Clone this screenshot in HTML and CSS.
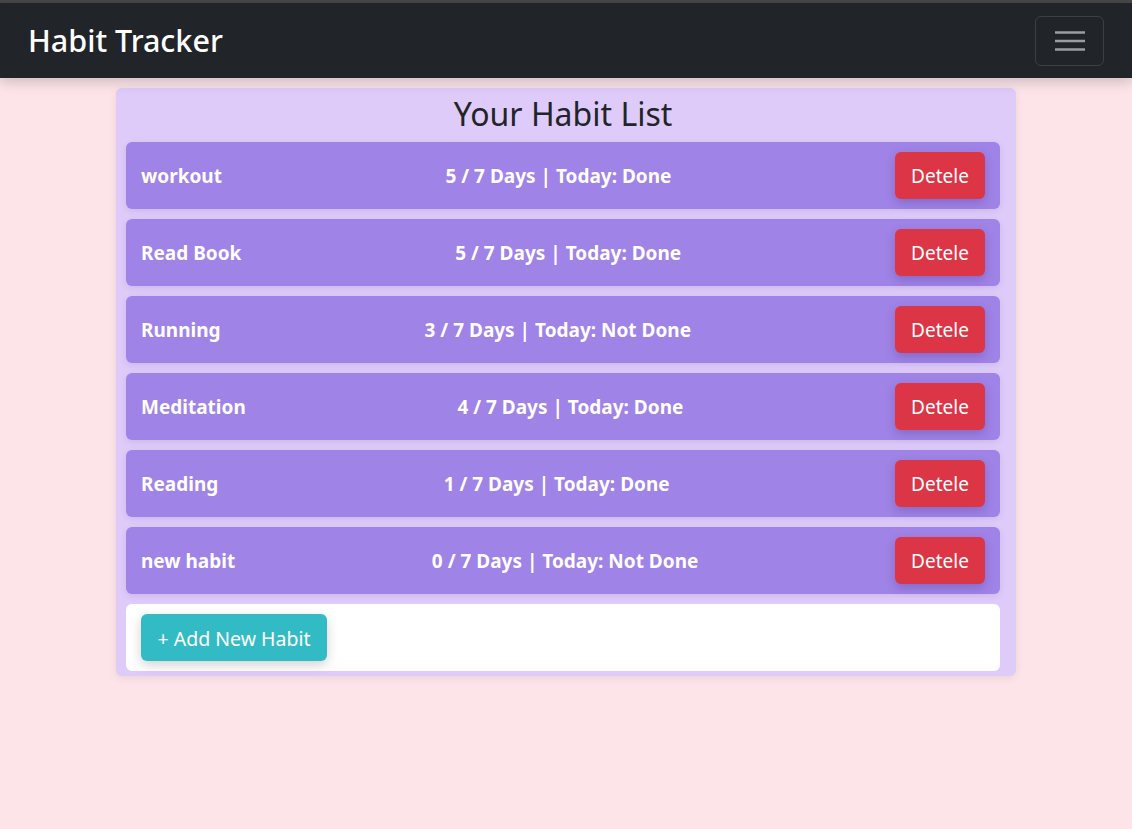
FILE: index.html
```html
<!DOCTYPE html>
<html lang="en">
<head>
<meta charset="utf-8">
<title>Habit Tracker</title>
<link rel="stylesheet" href="styles.css">
</head>
<body>
<div class="topstrip"></div>
<nav class="navbar">
  <span class="brand">Habit Tracker</span>
  <button class="toggler" aria-label="menu">
    <svg width="30" height="24" viewBox="0 0 30 24"><path d="M0 3.5h30M0 12h30M0 20.5h30" stroke="#9b9d9f" stroke-width="2.6" fill="none"/></svg>
  </button>
</nav>
<main class="wrap">
  <section class="card">
    <h2 class="title">Your Habit List</h2>
    <div class="row"><span class="name">workout</span><span class="stat">5 / 7 Days | Today: Done</span><button class="del">Detele</button></div>
    <div class="row"><span class="name">Read Book</span><span class="stat">5 / 7 Days | Today: Done</span><button class="del">Detele</button></div>
    <div class="row"><span class="name">Running</span><span class="stat">3 / 7 Days | Today: Not Done</span><button class="del">Detele</button></div>
    <div class="row"><span class="name">Meditation</span><span class="stat">4 / 7 Days | Today: Done</span><button class="del">Detele</button></div>
    <div class="row"><span class="name">Reading</span><span class="stat">1 / 7 Days | Today: Done</span><button class="del">Detele</button></div>
    <div class="row"><span class="name">new habit</span><span class="stat">0 / 7 Days | Today: Not Done</span><button class="del">Detele</button></div>
    <div class="addbox"><button class="add">+ Add New Habit</button></div>
  </section>
</main>
</body>
</html>
```
FILE: styles.css
```css
* { box-sizing: border-box; }
html, body { margin: 0; padding: 0; }
body {
  background: #fce4e9;
  font-family: "Noto Sans", "Open Sans", sans-serif;
  color: #212529;
  min-height: 829px;
}
.topstrip { height: 3px; background: #474747; }
.navbar {
  height: 75px;
  background: #212529;
  display: flex;
  align-items: center;
  justify-content: space-between;
  padding: 0 28px;
  box-shadow: 0 4px 12px rgba(0,0,0,0.18);
  position: relative;
}
.brand { color: #fff; font-size: 30.5px; line-height: 1; font-weight: 500; }
.toggler {
  width: 69px; height: 50px;
  background: transparent;
  border: 1px solid rgba(255,255,255,0.12);
  border-radius: 6px;
  display: flex; align-items: center; justify-content: center;
  padding: 0;
}
.wrap { display: flex; justify-content: center; padding-top: 10px; }
.card {
  width: 900px;
  background: #dfcbf9;
  border-radius: 6px;
  padding: 6px 16px 5px 10px;
  box-shadow: 0 2px 8px rgba(0,0,0,0.08);
}
.title {
  margin: 0 0 8px;
  text-align: center;
  font-weight: 400;
  font-size: 32px;
  line-height: 40px;
}
.row {
  height: 67px;
  background: #9f83e6;
  border-radius: 6px;
  display: flex; align-items: center; justify-content: space-between;
  padding: 1px 15px 0;
  margin-bottom: 10px;
  color: #fff;
  font-weight: 700;
  font-size: 19px;
  box-shadow: 0 2px 6px rgba(80,40,160,0.12);
}
.del {
  width: 90px; height: 47px;
  margin-top: -1px;
  padding-top: 2px;
  background: #dc3545;
  color: #fff;
  border: none;
  border-radius: 6px;
  font-family: inherit;
  font-size: 19px;
  font-weight: 400;
  box-shadow: 0 4px 10px rgba(60,30,120,0.25);
}
.addbox {
  height: 67px;
  background: #fff;
  border-radius: 6px;
  display: flex; align-items: center;
  padding: 0 15px;
}
.add {
  width: 186px; height: 47px;
  padding-top: 2px;
  background: #33bbc5;
  color: #fff;
  border: none;
  border-radius: 6px;
  font-family: inherit;
  font-size: 19.5px;
  box-shadow: 0 4px 12px rgba(0,0,0,0.18);
}
```
